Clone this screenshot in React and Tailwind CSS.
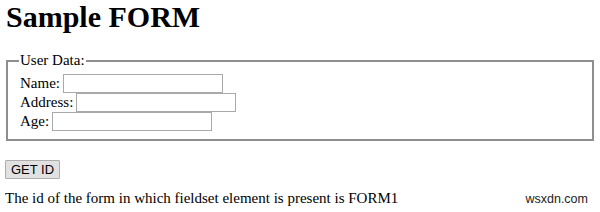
export default function App() {
  return (
    <div className="w-[600px] h-[212px] bg-white text-black px-[5px] pt-0 font-['Liberation_Serif',serif] relative overflow-hidden">
      <h1 className="text-[30px] font-bold leading-[33px] ml-[1px]">Sample FORM</h1>

      {/* fieldset */}
      <fieldset className="mt-[20px] ml-[1px] w-[588px] border-2 border-[#8e8e8e] px-[12px] pb-[8px] pt-0">
        <legend className="text-[15px] leading-[15px] px-[1px] -ml-[1px]">User Data:</legend>
        <div className="flex flex-col text-[15px] leading-[19px] mt-[6px]">
          <div className="flex items-center h-[19px]">
            <span>Name:</span>
            <input className="ml-[3px] w-[160px] h-[19px] border border-[#a9a9a9] bg-white" />
          </div>
          <div className="flex items-center h-[19px]">
            <span>Address:</span>
            <input className="ml-[3px] w-[160px] h-[19px] border border-[#a9a9a9] bg-white" />
          </div>
          <div className="flex items-center h-[19px]">
            <span>Age:</span>
            <input className="ml-[3px] w-[160px] h-[19px] border border-[#a9a9a9] bg-white" />
          </div>
        </div>
      </fieldset>

      <button className="mt-[19px] w-[55px] h-[19px] border border-[#adadad] bg-[#e1e1e1] rounded-[1px] text-[13px] leading-[17px] font-['Liberation_Sans',sans-serif] flex items-center justify-center">
        GET ID
      </button>

      <div className="flex items-baseline justify-between mt-[11px] pr-[7px]">
        <p className="text-[15px] leading-[17px]">
          The id of the form in which fieldset element is present is FORM1
        </p>
        <span className="text-[12.5px] text-[#222] font-['Liberation_Sans',sans-serif]">wsxdn.com</span>
      </div>
    </div>
  )
}
